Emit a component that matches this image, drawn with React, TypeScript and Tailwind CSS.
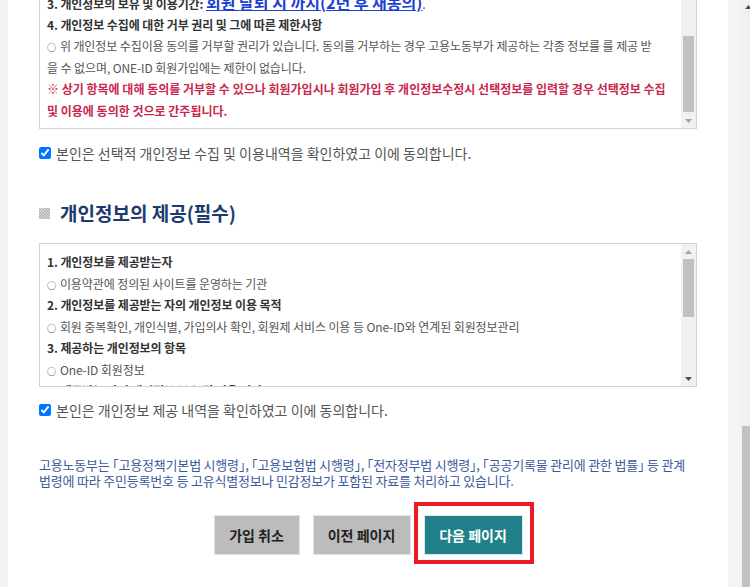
const font = "[font-family:'Noto_Sans_CJK_KR','Noto_Sans',sans-serif]";

function Arrow({ dir, color }: { dir: 'up' | 'down'; color: string }) {
  return (
    <svg width="7" height="4" viewBox="0 0 7 4">
      <polygon points={dir === 'up' ? '0,4 7,4 3.5,0' : '0,0 7,0 3.5,4'} fill={color} />
    </svg>
  );
}

function InnerScrollbar({ thumbTop, thumbHeight, upColor, downColor }: { thumbTop: string; thumbHeight: string; upColor: string; downColor: string }) {
  return (
    <div className="w-[15px] shrink-0 bg-[#f1f1f1] flex flex-col">
      <div className="h-[15px] flex items-center justify-center">
        <Arrow dir="up" color={upColor} />
      </div>
      <div className="flex-1 px-[2px]">
        <div className={`${thumbTop} ${thumbHeight} bg-[#c1c1c1]`} />
      </div>
      <div className="h-[15px] flex items-center justify-center">
        <Arrow dir="down" color={downColor} />
      </div>
    </div>
  );
}

function Line({ children, kind = 'normal' }: { children: React.ReactNode; kind?: 'normal' | 'bold' | 'red' }) {
  const cls =
    kind === 'bold'
      ? 'font-bold text-[#333] tracking-[-0.1px]'
      : kind === 'red'
        ? 'font-bold text-[#c8284d]'
        : 'text-[#555] tracking-[-0.1px]';
  return <div className={`whitespace-nowrap h-[21.5px] leading-[21.5px] ${cls}`}>{children}</div>;
}

function Dot() {
  return <span className="inline-block align-middle text-[9px] leading-none mr-[4px] text-[#444]">○</span>;
}

function Agree({ text }: { text: string }) {
  return (
    <label className="flex items-center gap-[5px] h-[20px]">
      <input type="checkbox" defaultChecked className="m-0 w-[12px] h-[12px] accent-[#0075ff]" />
      <span className="text-[14px] text-[#555] whitespace-nowrap">{text}</span>
    </label>
  );
}

function HatchIcon() {
  return (
    <svg width="11" height="11" viewBox="0 0 11 11">
      <defs>
        <pattern id="hatch" width="2" height="2" patternUnits="userSpaceOnUse" patternTransform="rotate(45)">
          <rect width="2" height="2" fill="#e2e2e2" />
          <rect width="1" height="2" fill="#a8a8a8" />
        </pattern>
      </defs>
      <rect width="11" height="11" fill="url(#hatch)" />
    </svg>
  );
}

export default function App() {
  return (
    <div className={`w-[750px] h-[587px] overflow-hidden flex bg-white ${font}`}>
      <div className="w-[8px] shrink-0 bg-[#f3f3f3]" />

      <div className="flex-1 flex flex-col px-[31px]">
        {/* 선택 항목 박스 (스크롤된 상태) */}
        <div className="-mt-[15px] h-[144px] shrink-0 flex border border-[#d2d2d2]">
          <div className="flex-1 overflow-hidden pl-[7px] pt-[6px] text-[12px]">
            <Line kind="bold">
              3. 개인정보의 보유 및 이용기간:{' '}
              <span className="text-[16px] tracking-normal text-[#1b3fd4] underline">회원 탈퇴 시 까지(2년 후 재동의)</span>
              <span className="text-[#1b3fd4] font-normal">.</span>
            </Line>
            <Line kind="bold">4. 개인정보 수집에 대한 거부 권리 및 그에 따른 제한사항</Line>
            <Line><Dot />위 개인정보 수집이용 동의를 거부할 권리가 있습니다. 동의를 거부하는 경우 고용노동부가 제공하는 각종 정보를 를 제공 받</Line>
            <Line>을 수 없으며, ONE-ID 회원가입에는 제한이 없습니다.</Line>
            <Line kind="red">※ 상기 항목에 대해 동의를 거부할 수 있으나 회원가입시나 회원가입 후 개인정보수정시 선택정보를 입력할 경우 선택정보 수집</Line>
            <Line kind="red">및 이용에 동의한 것으로 간주됩니다.</Line>
          </div>
          <InnerScrollbar thumbTop="mt-[35px]" thumbHeight="h-[76px]" upColor="#a3a3a3" downColor="#a3a3a3" />
        </div>

        <div className="mt-[14px]">
          <Agree text="본인은 선택적 개인정보 수집 및 이용내역을 확인하였고 이에 동의합니다." />
        </div>

        <div className="mt-[36px] h-[28px] flex items-center gap-[10px]">
          <HatchIcon />
          <h2 className="text-[19px] font-bold text-[#1d3a6e] whitespace-nowrap">개인정보의 제공(필수)</h2>
        </div>

        {/* 제공 항목 박스 */}
        <div className="mt-[16px] h-[144px] shrink-0 flex border border-[#d2d2d2]">
          <div className="flex-1 overflow-hidden pl-[7px] pt-[7px] text-[12px]">
            <Line kind="bold">1. 개인정보를 제공받는자</Line>
            <Line><Dot />이용약관에 정의된 사이트를 운영하는 기관</Line>
            <Line kind="bold">2. 개인정보를 제공받는 자의 개인정보 이용 목적</Line>
            <Line><Dot />회원 중복확인, 개인식별, 가입의사 확인, 회원제 서비스 이용 등 One-ID와 연계된 회원정보관리</Line>
            <Line kind="bold">3. 제공하는 개인정보의 항목</Line>
            <Line><Dot />One-ID 회원정보</Line>
            <Line kind="bold">4. 제공받는 자의 개인정보 보유 및 이용 기간</Line>
          </div>
          <InnerScrollbar thumbTop="mt-0" thumbHeight="h-[58px]" upColor="#a3a3a3" downColor="#505050" />
        </div>

        <div className="mt-[13px]">
          <Agree text="본인은 개인정보 제공 내역을 확인하였고 이에 동의합니다." />
        </div>

        <p className="mt-[37px] text-[13px] leading-[16px] tracking-[-0.2px] text-[#3d5a9c] whitespace-nowrap">
          고용노동부는 ｢고용정책기본법 시행령｣, ｢고용보험법 시행령｣, ｢전자정부법 시행령｣, ｢공공기록물 관리에 관한 법률｣ 등 관계
          <br />
          법령에 따라 주민등록번호 등 고유식별정보나 민감정보가 포함된 자료를 처리하고 있습니다.
        </p>

        <div className="mt-[26px] flex justify-center gap-[13px]">
          <button className="w-[86px] h-[40px] bg-[#bcbcbc] border border-[#e2e2e2] text-[14px] font-bold text-[#222]">
            가입 취소
          </button>
          <button className="w-[98px] h-[40px] bg-[#bcbcbc] border border-[#e2e2e2] text-[14px] font-bold text-[#222]">
            이전 페이지
          </button>
          <div className="relative">
            <button className="w-[99px] h-[40px] bg-[#21808a] border border-[#dbe8ea] text-[14px] font-bold text-white">
              다음 페이지
            </button>
            <span className="absolute -left-[10px] -top-[13px] -right-[11px] -bottom-[9px] border-4 border-[#ed1c24] pointer-events-none" />
          </div>
        </div>
      </div>

      <div className="w-[13px] shrink-0 bg-[#f4f4f4]" />
      <div className="w-[9px] shrink-0 bg-[#f0f0f0] flex flex-col">
        <div className="h-[14px] pl-[4px] pt-[5px]">
          <Arrow dir="up" color="#505050" />
        </div>
        <div className="flex-1" />
        <div className="h-[161px] ml-[1px] bg-[#c1c1c1]" />
      </div>
    </div>
  );
}
